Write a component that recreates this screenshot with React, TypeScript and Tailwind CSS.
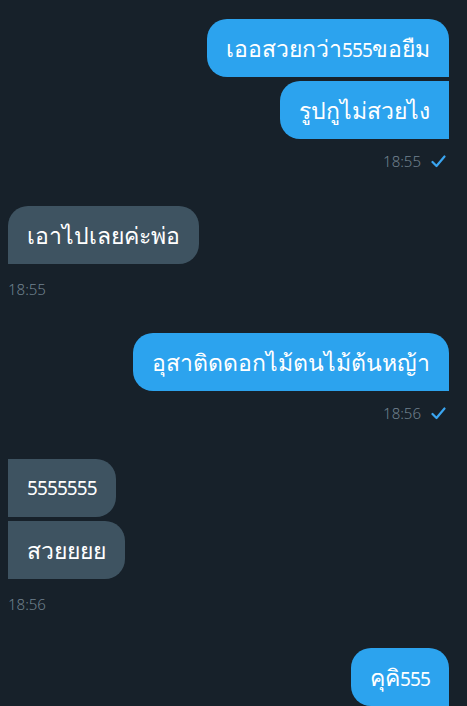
import React from "react";

type Msg = { text: string; shape: string };

// digits in the screenshot are narrower than the Thai glyphs, so size them apart
function Txt({ text }: { text: string }) {
  const parts = text.split(/(\d+)/).filter(Boolean);
  return (
    <span className="leading-none">
      {parts.map((p, i) =>
        /^\d+$/.test(p) ? (
          <span key={i} className="text-[19px] tracking-[-0.9px]">{p}</span>
        ) : (
          <span key={i} className="text-[23px]">{p}</span>
        )
      )}
    </span>
  );
}

function Check() {
  return (
    <svg width="15" height="13" viewBox="0 0 15 13" className="ml-[10px]">
      <path d="M1.5 7 L5.5 11 L13.5 1.5" fill="none" stroke="#3aa5f0" strokeWidth="2.2" strokeLinecap="round" strokeLinejoin="round" />
    </svg>
  );
}

function Outgoing({ items, time, className }: { items: Msg[]; time: string; className?: string }) {
  return (
    <div className={"flex flex-col items-end pr-[18px] " + (className ?? "")}>
      <div className="flex flex-col items-end gap-[4px]">
        {items.map((m, i) => (
          <div key={i} className={"h-[58px] flex items-center px-[19px] bg-[#2ca3ee] text-white " + m.shape}>
            <Txt text={m.text} />
          </div>
        ))}
      </div>
      <div className="mt-[12px] h-[20px] flex items-center pr-[3px] text-[15px] font-light text-[#71828f]">
        {time}
        <Check />
      </div>
    </div>
  );
}

function Incoming({ items, time, className }: { items: Msg[]; time: string; className?: string }) {
  return (
    <div className={"flex flex-col items-start pl-[8px] " + (className ?? "")}>
      <div className="flex flex-col items-start gap-[4px]">
        {items.map((m, i) => (
          <div key={i} className={"h-[58px] flex items-center px-[19px] bg-[#3e5361] text-white " + m.shape}>
            <Txt text={m.text} />
          </div>
        ))}
      </div>
      <div className="mt-[15px] h-[20px] flex items-center text-[15px] font-light text-[#71828f]">{time}</div>
    </div>
  );
}

export default function App() {
  return (
    <div
      className="w-[467px] h-[706px] overflow-hidden bg-[#17212a] pt-[19px]"
      style={{ fontFamily: '"Noto Sans", "Segoe UI", Tahoma, sans-serif' }}
    >
      <Outgoing
        items={[
          { text: "เออสวยกว่า555ขอยืม", shape: "rounded-[20px] rounded-br-none" },
          { text: "รูปกูไม่สวยไง", shape: "rounded-l-[20px] rounded-r-none" },
        ]}
        time="18:55"
      />
      <Incoming
        className="mt-[35px]"
        items={[{ text: "เอาไปเลยค่ะพ่อ", shape: "rounded-[20px] rounded-bl-none" }]}
        time="18:55"
      />
      <Outgoing
        className="mt-[34px]"
        items={[{ text: "อุสาติดดอกไม้ตนไม้ต้นหญ้า", shape: "rounded-[20px] rounded-br-none" }]}
        time="18:56"
      />
      <Incoming
        className="mt-[36px]"
        items={[
          { text: "5555555", shape: "rounded-r-[20px] rounded-l-none" },
          { text: "สวยยยย", shape: "rounded-r-[20px] rounded-l-none" },
        ]}
        time="18:56"
      />
      <Outgoing
        className="mt-[34px]"
        items={[{ text: "คุคิ555", shape: "rounded-[20px] rounded-br-none" }]}
        time="18:56"
      />
    </div>
  );
}
